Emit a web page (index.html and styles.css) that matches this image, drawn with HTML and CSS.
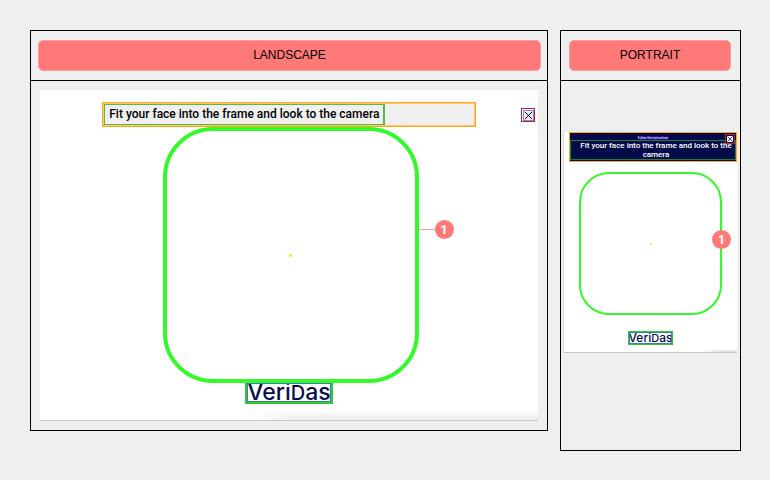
FILE: index.html
```
<!DOCTYPE html>
<html lang="en">
<head>
    <meta charset="UTF-8">
    <meta name="viewport" content="width=device-width, initial-scale=1.0">
    <title>Capture frame</title>
    <link rel="stylesheet" href="styles.css">
</head>
<body>
    <main class="boards">
        <section class="board">
            <header class="board-header">
                <h2 class="board-title">LANDSCAPE</h2>
            </header>
            <div class="board-body">
                <div class="screen">
                    <div class="message">
                        <p class="message-text">Fit your face into the frame and look to the camera</p>
                    </div>
                    <button class="close" type="button" aria-label="Close">
                        <svg viewBox="0 0 10 10"><path d="M1 1 9 9M9 1 1 9"/></svg>
                    </button>
                    <div class="face-frame">
                        <span class="dot"></span>
                        <span class="pin">1</span>
                    </div>
                    <div class="logo">Veri<span class="logo-d">D</span>as</div>
                </div>
            </div>
        </section>

        <section class="board portrait">
            <header class="board-header">
                <h2 class="board-title">PORTRAIT</h2>
            </header>
            <div class="board-body">
                <div class="screen">
                    <div class="message">
                        <p class="caption">Follow the instructions</p>
                        <p class="message-text">Fit your face into the frame and look to the camera</p>
                        <button class="close" type="button" aria-label="Close">
                            <svg viewBox="0 0 10 10"><path d="M1 1 9 9M9 1 1 9"/></svg>
                        </button>
                    </div>
                    <div class="face-frame">
                        <span class="dot"></span>
                        <span class="pin">1</span>
                    </div>
                    <div class="logo">Veri<span class="logo-d">D</span>as</div>
                </div>
            </div>
        </section>
    </main>
</body>
</html>
```
FILE: styles.css
```
* {
    box-sizing: border-box;
}

body {
    margin: 0;
    background-color: #efefef;
    color: #000;
    font-family: "Liberation Sans", Arial, sans-serif;
}

h2,
p {
    margin: 0;
}

.boards {
    display: grid;
    grid-template-columns: 518fr 181fr;
    gap: 12px;
    align-items: start;
    padding: 30px 29px 29px 30px;
}

.board {
    border: 1px solid #000;
}

.board-header {
    padding: 9px 6px 9px 7px;
    border-bottom: 1px solid #000;
}

.board-title {
    border: 1px solid #fa9c9c;
    border-radius: 5px;
    background-color: #ff7979;
    font-size: 12px;
    font-weight: normal;
    line-height: 29px;
    text-align: center;
}

.board-body {
    padding: 9px;
}

.screen {
    position: relative;
    display: flex;
    flex-direction: column;
    align-items: center;
    padding: 12px 0 16px;
    border-bottom: 1px solid #c8c8c8;
    background:
        linear-gradient(to right, #fff 43%, transparent 50%),
        linear-gradient(to top, #ececec, #fff 10px);
}

.message {
    display: flex;
    width: 75%;
    border: 1px solid #ffa81c;
    outline: 1px solid #ffc76b;
    outline-offset: -2px;
    background-color: #f1f0f0;
    font-family: Roboto, sans-serif;
}

.message-text {
    padding: 0 4px;
    border: 2px solid #55bd43;
    font-size: 12px;
    font-weight: 500;
    line-height: 19px;
    white-space: nowrap;
}

/* close button sits over the top right corner */
.close {
    position: absolute;
    top: 18px;
    right: 3px;
    width: 14px;
    height: 14px;
    padding: 1px 0 0 1px;
    border: 1px solid #bd2028;
    background-color: #fff;
}

.close svg {
    display: block;
    width: 100%;
    height: 100%;
    border: 1px solid #8585e0;
    background-color: #ececff;
    fill: none;
    stroke: #000;
    stroke-width: 1.1;
}

.face-frame {
    position: relative;
    z-index: 1;
    display: grid;
    place-items: center;
    width: 256px;
    aspect-ratio: 1;
    margin-left: 3px;
    border: 4px solid #32fa28;
    border-radius: 50px;
}

.dot {
    width: 3px;
    height: 3px;
    border-radius: 50%;
    background-color: #f3e625;
}

.pin {
    position: absolute;
    top: 89px;
    right: -39px;
    width: 19px;
    border-radius: 50%;
    background-color: #ff7979;
    color: #fff;
    font-family: Roboto, sans-serif;
    font-size: 13px;
    font-weight: bold;
    line-height: 19px;
    text-align: center;
}

/* leader line from the frame edge to the pin */
.pin::before {
    content: "";
    position: absolute;
    top: 9px;
    right: 100%;
    width: 16px;
    height: 1px;
    background-color: #ff9c9c;
}

.logo {
    margin-top: -2px;
    border: 2px solid #32c832;
    outline: 1px solid #3d80a8;
    outline-offset: -3px;
    color: #050d4c;
    font-family: Inter, sans-serif;
    font-size: 23px;
    font-weight: 500;
    line-height: 18px;
}

.logo-d {
    font-size: 20px;
}

.portrait .board-header {
    padding: 9px 9px 9px 8px;
}

.portrait .board-body {
    padding: 51px 3px 97px 2px;
}

.portrait .screen {
    padding: 0 0 7px;
    border-left: 1px solid #dedede;
    background:
        linear-gradient(to right, #fff 80%, transparent 90%),
        linear-gradient(to top, #dcdcdc, #fff 3px);
}

.portrait .message {
    position: relative;
    display: block;
    align-self: stretch;
    width: auto;
    margin: 0 0 10px 5px;
    padding-top: 3px;
    padding-bottom: 1px;
    outline: none;
    background-color: #030c49;
    color: #fff;
    text-align: center;
}

.caption {
    width: max-content;
    margin: 0 auto;
    background-color: #160b84;
    font-size: 3px;
    line-height: 4px;
}

.portrait .message-text {
    padding: 0 0 0 6px;
    border: 1px solid #207b45;
    font-size: 8px;
    line-height: 9px;
    white-space: normal;
}

.portrait .close {
    top: 1px;
    right: 1px;
    width: 10px;
    height: 10px;
    padding: 1px;
    background-color: #030c49;
}

.portrait .close svg {
    border: 0;
}

.portrait .face-frame {
    width: 143px;
    margin-left: 0;
    border-width: 2px;
    border-radius: 30px;
}

.portrait .dot {
    width: 2px;
    height: 2px;
}

.portrait .pin {
    top: 56px;
    right: -11px;
}

.portrait .pin::before {
    display: none;
}

.portrait .logo {
    margin-top: 16px;
    border-width: 1px;
    outline-offset: -2px;
    font-size: 12px;
    line-height: 11px;
}

.portrait .logo-d {
    font-size: 11px;
}
```
